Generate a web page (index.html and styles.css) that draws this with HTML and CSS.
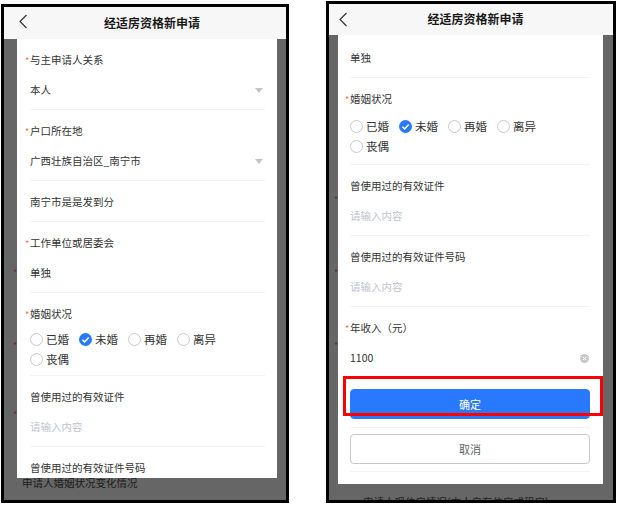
FILE: index.html
```html
<!DOCTYPE html>
<html lang="zh-CN">
<head>
<meta charset="utf-8">
<title>经适房资格新申请</title>
<link rel="stylesheet" href="styles.css">
</head>
<body>
<div class="stage">
  <section class="phone phone-left">
    <header class="nav">
      <svg class="back" width="10" height="15" viewBox="0 0 10 15"><path d="M8.5 1 L2 7.5 L8.5 14" fill="none" stroke="#333" stroke-width="1.2"/></svg>
      <h1 class="title">经适房资格新申请</h1>
      <span></span>
    </header>
    <div class="screen">
      <span class="under-star star-1">*</span>
      <span class="under-star star-2">*</span>
      <span class="under-star star-3">*</span>
      <p class="under-text under-left">申请人婚姻状况变化情况</p>
      <div class="sheet sheet-left">
        <div class="field">
          <div class="label req">与主申请人关系</div>
          <div class="value select"><span>本人</span><i class="caret"></i></div>
        </div>
        <div class="field">
          <div class="label req">户口所在地</div>
          <div class="value select"><span>广西壮族自治区_南宁市</span><i class="caret"></i></div>
        </div>
        <div class="field">
          <div class="value">南宁市是是发到分</div>
        </div>
        <div class="field">
          <div class="label req">工作单位或居委会</div>
          <div class="value">单独</div>
        </div>
        <div class="field field-radio">
          <div class="label req">婚姻状况</div>
          <div class="radios">
            <div class="radio-row">
              <span class="radio"><i class="dot"></i>已婚</span>
              <span class="radio"><svg class="dot-on" width="13" height="13" viewBox="0 0 13 13"><circle cx="6.5" cy="6.5" r="6.5" fill="#2979ff"/><path d="M3.4 6.7 L5.6 8.9 L9.7 4.4" fill="none" stroke="#fff" stroke-width="1.5"/></svg>未婚</span>
              <span class="radio"><i class="dot"></i>再婚</span>
              <span class="radio"><i class="dot"></i>离异</span>
            </div>
            <div class="radio-row">
              <span class="radio"><i class="dot"></i>丧偶</span>
            </div>
          </div>
        </div>
        <div class="field">
          <div class="label">曾使用过的有效证件</div>
          <div class="value placeholder">请输入内容</div>
        </div>
        <div class="field">
          <div class="label">曾使用过的有效证件号码</div>
          <div class="value placeholder">请输入内容</div>
        </div>
      </div>
    </div>
  </section>

  <section class="phone phone-right">
    <header class="nav">
      <svg class="back" width="10" height="15" viewBox="0 0 10 15"><path d="M8.5 1 L2 7.5 L8.5 14" fill="none" stroke="#333" stroke-width="1.2"/></svg>
      <h1 class="title">经适房资格新申请</h1>
      <span></span>
    </header>
    <div class="screen">
      <span class="under-star star-r1">*</span>
      <span class="under-star star-r2">*</span>
      <span class="under-star star-r3">*</span>
      <p class="under-text under-right">申请人现住房情况(本人自有住房或租房)</p>
      <div class="sheet sheet-right">
        <div class="field">
          <div class="value">单独</div>
        </div>
        <div class="field field-radio">
          <div class="label req">婚姻状况</div>
          <div class="radios">
            <div class="radio-row">
              <span class="radio"><i class="dot"></i>已婚</span>
              <span class="radio"><svg class="dot-on" width="13" height="13" viewBox="0 0 13 13"><circle cx="6.5" cy="6.5" r="6.5" fill="#2979ff"/><path d="M3.4 6.7 L5.6 8.9 L9.7 4.4" fill="none" stroke="#fff" stroke-width="1.5"/></svg>未婚</span>
              <span class="radio"><i class="dot"></i>再婚</span>
              <span class="radio"><i class="dot"></i>离异</span>
            </div>
            <div class="radio-row">
              <span class="radio"><i class="dot"></i>丧偶</span>
            </div>
          </div>
        </div>
        <div class="field">
          <div class="label">曾使用过的有效证件</div>
          <div class="value placeholder">请输入内容</div>
        </div>
        <div class="field">
          <div class="label">曾使用过的有效证件号码</div>
          <div class="value placeholder">请输入内容</div>
        </div>
        <div class="field">
          <div class="label req">年收入（元）</div>
          <div class="value select"><span>1100</span><svg class="clear" width="9" height="9" viewBox="0 0 9 9"><circle cx="4.5" cy="4.5" r="4.5" fill="#c8c9cc"/><path d="M3 3 L6 6 M6 3 L3 6" stroke="#fff" stroke-width="1"/></svg></div>
        </div>
        <div class="btn-row btn-row-first">
          <button class="btn btn-primary" type="button">确定</button>
        </div>
        <div class="btn-row">
          <button class="btn btn-plain" type="button">取消</button>
        </div>
        <div class="highlight"></div>
      </div>
    </div>
  </section>
</div>
</body>
</html>
```

FILE: styles.css
```css
* {
  box-sizing: border-box;
  margin: 0;
  padding: 0;
}

html, body {
  width: 619px;
  height: 506px;
  overflow: hidden;
  background: #fff;
}

body {
  font-family: "Noto Sans CJK SC", "Noto Sans", sans-serif;
  color: #333;
}

.stage {
  display: flex;
  align-items: flex-start;
  padding-left: 1px;
}

.phone {
  border: 3px solid #000;
  background: #666;
  display: flex;
  flex-direction: column;
  overflow: hidden;
}

.phone-left {
  width: 288px;
  height: 499px;
  margin-top: 4px;
}

.phone-right {
  width: 290px;
  height: 502px;
  margin-top: 1px;
  margin-left: 37px;
}

.nav {
  flex: none;
  height: 32px;
  background: #f7f7f7;
  display: grid;
  grid-template-columns: 1fr auto 1fr;
  align-items: center;
}

.phone-left .nav {
  padding-left: 14px;
  padding-bottom: 3px;
}

.phone-right .nav {
  height: 31px;
  padding-left: 9px;
  padding-bottom: 1px;
}

.back {
  display: block;
}

.title {
  font-size: 12px;
  font-weight: 700;
  color: #1a1a1a;
  line-height: 16px;
}

.phone-left .title {
  padding-top: 3px;
}

.screen {
  position: relative;
  flex: 1;
}

.phone-left .screen {
  padding: 0 9px 0 13px;
}

.phone-right .screen {
  padding: 0 10px 0 9px;
}

.under-star {
  position: absolute;
  color: #6a2d2d;
  font-size: 9px;
  line-height: 10px;
}

.star-1 { left: 9px; top: 229px; }
.star-2 { left: 9px; top: 302px; }
.star-3 { left: 9px; top: 371px; }
.star-r1 { left: 5px; top: 160px; }
.star-r2 { left: 5px; top: 233px; }
.star-r3 { left: 5px; top: 306px; }

.under-text {
  position: absolute;
  font-size: 10.5px;
  line-height: 12px;
  color: #1c1c1c;
  white-space: nowrap;
}

.under-left {
  left: 18px;
  top: 438px;
}

.under-right {
  left: 34px;
  top: 461px;
}

.sheet {
  position: relative;
  z-index: 1;
  background: #fff;
}

.sheet-left {
  height: 439px;
  overflow: hidden;
}

.sheet-right {
  height: 449px;
  padding-top: 2px;
}

.field {
  margin: 0 12px 0 13px;
  padding: 6px 0 4px;
  border-bottom: 1px solid #f3f3f3;
}

.sheet-right .field,
.sheet-right .btn-row {
  margin: 0 13px 0 12px;
}

.label,
.value {
  height: 30px;
  line-height: 30px;
  font-size: 10.5px;
  white-space: nowrap;
}

.label {
  color: #333;
}

.req::before {
  content: "*";
  display: inline-block;
  width: 5px;
  margin-left: -5px;
  color: #f56c6c;
  font-size: 9px;
}

.value {
  color: #333;
}

.select {
  display: flex;
  align-items: center;
  justify-content: space-between;
}

.caret {
  width: 0;
  height: 0;
  border-left: 4.5px solid transparent;
  border-right: 4.5px solid transparent;
  border-top: 5px solid #c0c4cc;
  margin-right: 2px;
}

.clear {
  display: block;
  margin-right: 1px;
}

.placeholder {
  color: #c0c4cc;
}

.sheet-left .field-radio {
  padding-bottom: 6px;
}

.sheet-right .field-radio {
  padding-bottom: 8px;
}

.sheet-right .radios {
  padding-top: 2px;
}

.radio-row {
  display: flex;
  height: 20px;
  align-items: center;
}

.radio {
  display: flex;
  align-items: center;
  font-size: 11.5px;
  color: #333;
  margin-right: 10px;
}

.dot,
.dot-on {
  display: block;
  width: 13px;
  height: 13px;
  margin-right: 3px;
  flex: none;
}

.dot {
  border: 1px solid #c8c9cc;
  border-radius: 50%;
}

.btn-row {
  padding: 10px 0 7px;
  border-bottom: 1px solid #f3f3f3;
}

.btn-row-first {
  padding-top: 11px;
  padding-bottom: 8px;
}

.btn {
  display: block;
  width: 100%;
  height: 30px;
  border-radius: 4px;
  font-family: inherit;
  font-size: 11px;
}

.btn-primary {
  background: #2979ff;
  border: 1px solid #2979ff;
  color: #fff;
}

.btn-plain {
  background: #fff;
  border: 1px solid #c8c8c8;
  color: #606266;
}

.btn-row + .btn-row {
  padding-top: 6px;
}

.highlight {
  position: absolute;
  left: 5px;
  top: 341px;
  width: 260px;
  height: 40px;
  border: 3px solid #f00;
}
```
